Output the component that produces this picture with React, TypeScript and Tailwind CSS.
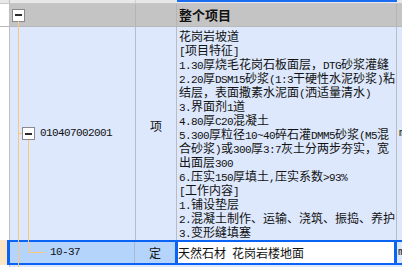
import React from "react";

function Mixed({ text }: { text: string }) {
  const parts = text.split(/([\x00-\x7F]+)/).filter((p) => p.length > 0);
  return (
    <>
      {parts.map((p, i) =>
        /^[\x00-\x7F]+$/.test(p) ? (
          <span key={i} className="font-['Liberation_Mono',monospace] text-[11px] tracking-[-0.6px] whitespace-pre">
            {p}
          </span>
        ) : (
          <span key={i}>{p}</span>
        )
      )}
    </>
  );
}

const lines = [
  "花岗岩坡道",
  "[项目特征]",
  "1.30厚烧毛花岗石板面层，DTG砂浆灌缝",
  "2.20厚DSM15砂浆(1:3干硬性水泥砂浆)粘",
  "结层，表面撒素水泥面(洒适量清水)",
  "3.界面剂1道",
  "4.80厚C20混凝土",
  "5.300厚粒径10~40碎石灌DMM5砂浆(M5混",
  "合砂浆)或300厚3:7灰土分两步夯实，宽",
  "出面层300",
  "6.压实150厚填土,压实系数>93%",
  "[工作内容]",
  "1.铺设垫层",
  "2.混凝土制作、运输、浇筑、振捣、养护",
  "3.变形缝填塞",
];

function Box() {
  return (
    <div className="w-[13px] h-[13px] border border-[#8a8a8a] bg-white flex items-center justify-center shrink-0">
      <div className="w-[7px] h-[2px] bg-[#2a2a2a]" />
    </div>
  );
}

const mono = "font-['Liberation_Mono',monospace] text-[11px] tracking-[-0.6px]";

export default function App() {
  return (
    <div className="relative w-[402px] h-[267px] overflow-hidden bg-white text-[12px] text-[#111] font-['Noto_Sans_CJK_SC',sans-serif]">
      {/* top strip */}
      <div className="flex h-[4px] bg-[#e8e8e8] border-b border-[#c8c8c8]">
        <div className="w-[10px] shrink-0 border-r border-[#c0c0c0]" />
        <div className="w-[126px] shrink-0 border-r border-[#d0d0d0]" />
        <div className="w-[41px] shrink-0" />
        <div className="w-[220px] shrink-0 border-t-2 border-[#1a6cf0]" />
        <div className="flex-1 min-w-0" />
      </div>
      {/* header row */}
      <div className="flex h-[23px] border-b border-[#b8b8b8]">
        <div className="w-[10px] shrink-0 bg-white border-r border-[#c0c0c0]" />
        <div className="w-[126px] shrink-0 bg-[#c4c4c4] border-r border-[#b4b4b4] flex items-center pl-[2px]">
          <Box />
        </div>
        <div className="w-[41px] shrink-0 bg-[#c4c4c4] border-r border-[#b4b4b4]" />
        <div className="w-[220px] shrink-0 bg-[#c4c4c4] border-r border-[#b4b4b4] flex items-center pl-[2px] text-[13px] font-bold">
          整个项目
        </div>
        <div className="flex-1 min-w-0 bg-[#c4c4c4]" />
      </div>
      {/* big row */}
      <div className="flex h-[213px]">
        <div className="w-[10px] shrink-0 bg-white border-r border-[#c0c0c0]" />
        <div className="w-[126px] shrink-0 bg-[#dde8fc] border-r border-[#b8bcc4] flex items-center pl-[12px]">
          <Box />
          <span className={`ml-[5px] ${mono}`}>010407002001</span>
        </div>
        <div className="w-[41px] shrink-0 bg-[#dde8fc] border-r border-[#b8bcc4] flex items-center justify-center pb-[16px]">
          项
        </div>
        <div className="w-[220px] shrink-0 bg-[#dde8fc] border-r border-[#b8bcc4] pl-[2px] pt-[2px] leading-[14px] overflow-hidden">
          {lines.map((l, i) => (
            <div key={i} className="h-[14px] whitespace-nowrap">
              <Mixed text={l} />
            </div>
          ))}
        </div>
        <div className="flex-1 min-w-0 bg-[#dde8fc] flex items-center pl-[2px] overflow-hidden">
          <span className={mono}>m2</span>
        </div>
      </div>
      {/* selected row */}
      <div className="flex h-[25px]">
        <div className="w-[7px] shrink-0 bg-[#fde6c8]" />
        <div className="flex-1 min-w-0 flex border-y-2 border-l-[3px] border-[#0b63f6]">
          <div className="w-[125px] shrink-0 bg-[#b4d4fc] border-r border-[#a8b8d0] flex items-center pl-[40px]">
            <span className={mono}>10-37</span>
          </div>
          <div className="w-[40px] shrink-0 bg-[#b4d4fc] flex items-center justify-center">定</div>
          <div className="w-[222px] shrink-0 bg-white border-x-[3px] border-[#0b63f6] flex items-center whitespace-nowrap">
            <Mixed text="天然石材 花岗岩楼地面" />
          </div>
          <div className="flex-1 min-w-0 bg-[#dde8fc] flex items-center pl-[1px] overflow-hidden">
            <span className={mono}>m2</span>
          </div>
        </div>
      </div>
      <div className="flex h-[2px]">
        <div className="w-[10px] shrink-0 bg-white border-r border-[#c0c0c0]" />
        <div className="flex-1 min-w-0 bg-[#dde8fc]" />
      </div>
      {/* tree lines overlay */}
      <svg className="absolute left-0 top-0 pointer-events-none" width="402" height="267">
        <g stroke="#fcc77c" strokeWidth="1" shapeRendering="crispEdges">
          <line x1="18.5" y1="21" x2="18.5" y2="267" />
          <line x1="18" y1="133.5" x2="22" y2="133.5" />
          <line x1="28.5" y1="140" x2="28.5" y2="252" />
          <line x1="28" y1="252.5" x2="45" y2="252.5" />
        </g>
      </svg>
    </div>
  );
}
